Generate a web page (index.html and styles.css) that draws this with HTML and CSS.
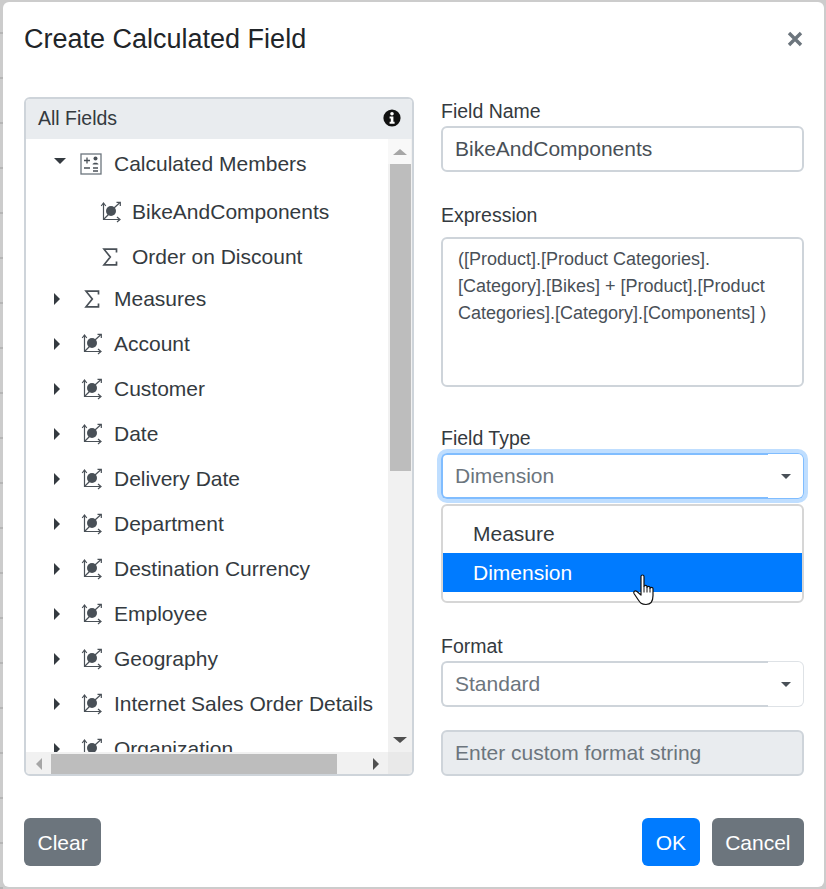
FILE: index.html
```html
<!DOCTYPE html>
<html lang="en">
<head>
  <meta charset="UTF-8">
  <title>Create Calculated Field</title>
  <link rel="stylesheet" href="styles.css">
</head>
<body>

  <svg class="defs" width="0" height="0">
    <symbol id="dim" viewBox="0 0 22 22">
      <g fill="none" stroke="#495057" stroke-width="1.2">
        <path d="M3.5 3v15.5h16"/>
        <path d="M1.2 5 3.5 2 5.8 5"/>
        <path d="M17 16 20 18.500 17 21"/>
        <path d="M3.500 18.500 9 13"/>
        <path d="M14 7 20 1.500"/>
        <path d="M16.500 1.300h3.800v3.800"/>
      </g>
      <circle cx="11" cy="10" r="5" fill="#495057"/>
    </symbol>
    <symbol id="sigma" viewBox="0 0 16 18">
      <path d="M14.500 4.500V1.200H2l6.300 7.800L2 16.800h12.500v-3.300" fill="none" stroke="#495057" stroke-width="1.700"/>
    </symbol>
    <symbol id="calc" viewBox="0 0 22 22">
      <rect x="1" y="1" width="20" height="20" fill="#fff" stroke="#6c757d" stroke-width="1.300"/>
      <path d="M4 7.500h6M7 4.500v6M4 15h6M13 15h5M13 18h5" fill="none" stroke="#495057" stroke-width="1.300"/>
      <circle cx="15.500" cy="5.500" r="2" fill="#495057"/>
      <path d="M12.500 11.500c0-2.500 6-2.500 6 0z" fill="#495057"/>
    </symbol>
  </svg>

  <div class="dialog">
    <header class="dialog-head">
      <h1>Create Calculated Field</h1>
      <svg class="close" width="16" height="16" viewBox="0 0 16 16"><path d="M2 2l12 12M14 2 2 14"/></svg>
    </header>

    <div class="dialog-body">
      <section class="fields">
        <div class="fields-head">
          <span>All Fields</span>
          <svg class="info" width="18" height="18" viewBox="0 0 18 18">
            <circle cx="9" cy="9" r="8.600" fill="#111"/>
            <circle cx="9" cy="4.800" r="1.800" fill="#fff"/>
            <path d="M6.600 7.600h3.800v5.200h1.200v1.900H6.600v-1.900h1.200V9.500H6.600z" fill="#fff"/>
          </svg>
        </div>

        <div class="fields-main">
          <ul class="tree">
            <li class="row row-first"><i class="caret-down"></i><svg class="ico"><use href="#calc"/></svg>Calculated Members</li>
            <li class="row row-child row-bike"><svg class="ico"><use href="#dim"/></svg>BikeAndComponents</li>
            <li class="row row-child row-order"><svg class="ico ico-sigma"><use href="#sigma"/></svg>Order on Discount</li>
            <li class="row row-measures"><i class="caret-right"></i><svg class="ico ico-sigma"><use href="#sigma"/></svg>Measures</li>
            <li class="row"><i class="caret-right"></i><svg class="ico"><use href="#dim"/></svg>Account</li>
            <li class="row"><i class="caret-right"></i><svg class="ico"><use href="#dim"/></svg>Customer</li>
            <li class="row"><i class="caret-right"></i><svg class="ico"><use href="#dim"/></svg>Date</li>
            <li class="row"><i class="caret-right"></i><svg class="ico"><use href="#dim"/></svg>Delivery Date</li>
            <li class="row"><i class="caret-right"></i><svg class="ico"><use href="#dim"/></svg>Department</li>
            <li class="row"><i class="caret-right"></i><svg class="ico"><use href="#dim"/></svg>Destination Currency</li>
            <li class="row"><i class="caret-right"></i><svg class="ico"><use href="#dim"/></svg>Employee</li>
            <li class="row"><i class="caret-right"></i><svg class="ico"><use href="#dim"/></svg>Geography</li>
            <li class="row"><i class="caret-right"></i><svg class="ico"><use href="#dim"/></svg>Internet Sales Order Details</li>
            <li class="row"><i class="caret-right"></i><svg class="ico"><use href="#dim"/></svg>Organization</li>
          </ul>

          <div class="vbar">
            <div class="vbar-btn"><i class="arrow-up"></i></div>
            <div class="vbar-thumb"></div>
            <div class="vbar-rest"><i class="arrow-down"></i></div>
          </div>

          <div class="hbar">
            <div class="hbar-btn"><i class="arrow-left"></i></div>
            <div class="hbar-thumb"></div>
            <div class="hbar-rest"><i class="arrow-right"></i></div>
          </div>
          <div class="corner"></div>
        </div>
      </section>

      <section class="form">
        <label class="lbl lbl-name">Field Name</label>
        <div class="input">BikeAndComponents</div>

        <label class="lbl lbl-expr">Expression</label>
        <div class="expr">([Product].[Product Categories].<br>[Category].[Bikes] + [Product].[Product<br>Categories].[Category].[Components] )</div>

        <label class="lbl lbl-type">Field Type</label>
        <div class="select focused"><span class="sel-text">Dimension</span><span class="sel-btn"><i class="caret-down"></i></span></div>
        <ul class="menu">
          <li>Measure</li>
          <li class="selected">Dimension</li>
        </ul>

        <label class="lbl lbl-format">Format</label>
        <div class="select"><span class="sel-text">Standard</span><span class="sel-btn"><i class="caret-down"></i></span></div>

        <div class="input disabled">Enter custom format string</div>
      </section>
    </div>

    <footer class="dialog-foot">
      <button class="btn btn-grey btn-clear">Clear</button>
      <button class="btn btn-blue">OK</button>
      <button class="btn btn-grey">Cancel</button>
    </footer>
  </div>

  <svg class="cursor" width="26" height="34" viewBox="0 0 26 34">
    <path d="M9 2.500c0-2 3-2 3 0v10c0-1.500 3-1.500 3 0v1c0-1.500 3-1.500 3 0v1c0-1.500 3-1.500 3 0v7c0 5-2 9-7 9s-6-2-8-5l-4-6c-1-2 1-3.500 3-2l4 3.500z" fill="#fff" stroke="#111" stroke-width="1.200" stroke-linejoin="round"/>
    <path d="M12 12.500v6M15 13.500v5M18 14.500v4" fill="none" stroke="#111"/>
  </svg>

</body>
</html>
```

FILE: styles.css
```css
* { box-sizing: border-box; }
html, body { margin: 0; height: 889px; overflow: hidden; }
body { position: relative; background: #ccc linear-gradient(#b5b5b5 2px, transparent 2px) 0 32px / 3px 45px repeat-y; font-family: "Liberation Sans", Arial, sans-serif; font-size: 21px; color: #343a40; padding: 2px 2px 2px 3px; }
.defs { position: absolute; }

.dialog { height: 885px; background: #fff; border-radius: 6px; display: flex; flex-direction: column; }

.dialog-head { height: 95px; padding: 20px 21px 0 21px; display: flex; justify-content: space-between; flex-shrink: 0; }
.dialog-head h1 { margin: 0; font-size: 27px; font-weight: 400; line-height: 34px; color: #212529; }
.close { margin: 9px 0 0 0; fill: none; stroke: #6c757d; stroke-width: 3.400; }

.dialog-body { display: flex; padding: 0 20px 0 21px; gap: 27px; height: 679px; flex-shrink: 0; }

.fields { width: 390px; flex-shrink: 0; border: 2px solid #ced4da; border-radius: 6px; overflow: hidden; display: flex; flex-direction: column; }
.fields-head { height: 40px; flex-shrink: 0; background: #e9ecef; padding: 0 11px 2px 12px; display: flex; align-items: center; justify-content: space-between; font-size: 19.500px; }
.fields-main { flex: 1; display: grid; grid-template-columns: 1fr 24px; grid-template-rows: 1fr 22px; min-height: 0; }

.tree { list-style: none; margin: 0; padding: 0; height: 613px; overflow: hidden; }
.row { height: 45px; display: flex; align-items: center; padding-left: 28px; white-space: nowrap; }
.row-first { height: 50px; }
.row-first .ico { margin-right: 12px; }
.row-child { padding-left: 74px; }
.row-bike { height: 46px; }
.row-order { height: 44px; }
.row-measures { height: 40px; margin-bottom: 2px; }
.ico { width: 22px; height: 22px; margin-left: 14px; margin-right: 11px; flex-shrink: 0; }
.ico-sigma { width: 16px; height: 18px; margin-left: 17px; margin-right: 14px; }
.row-child .ico { margin: 0 10px 0 0; }
.row-child .ico-sigma { margin: 0 14px 0 2px; }

.caret-down { display: block; width: 0; height: 0; border: 6.500px solid transparent; border-top: 6px solid #343a40; border-bottom: 0; }
.row-first .caret-down { margin-top: -6px; }
.caret-right { display: block; width: 0; height: 0; margin-right: 7px; border: 6.500px solid transparent; border-left: 6px solid #343a40; border-right: 0; }

.vbar { background: #f1f1f1; display: flex; flex-direction: column; padding-right: 1px; }
.vbar-btn { height: 25px; background: #f8f8f8; display: flex; justify-content: center; align-items: center; }
.vbar-thumb { height: 307px; background: #bdbdbd; margin-left: 2px; }
.vbar-rest { flex: 1; display: flex; justify-content: center; align-items: flex-end; padding-bottom: 9px; }

.hbar { grid-column: 1; background: #f1f1f1; display: flex; padding-top: 2px; }
.hbar-btn { width: 25px; display: flex; align-items: center; justify-content: center; }
.hbar-thumb { width: 286px; background: #bdbdbd; }
.hbar-rest { flex: 1; display: flex; align-items: center; justify-content: flex-end; padding-right: 9px; }
.corner { background: #e9e9e9; }

.arrow-up { width: 0; height: 0; border: 7px solid transparent; border-top: 0; border-bottom: 6px solid #a6a6a6; }
.arrow-down { width: 0; height: 0; border: 7px solid transparent; border-bottom: 0; border-top: 6px solid #505050; }
.arrow-left { width: 0; height: 0; border: 6px solid transparent; border-left: 0; border-right: 6px solid #a6a6a6; }
.arrow-right { width: 0; height: 0; border: 6px solid transparent; border-right: 0; border-left: 6px solid #505050; }

.form { width: 363px; display: flex; flex-direction: column; }
.lbl { display: block; line-height: 24px; font-size: 19.500px; }
.lbl-name { margin-top: 2px; margin-bottom: 3px; }
.lbl-expr { margin-top: 31px; margin-bottom: 10px; }
.lbl-type { margin-top: 39px; margin-bottom: 3px; }
.lbl-format { margin-top: 31px; margin-bottom: 3px; }

.input { height: 46px; border: 2px solid #ced4da; border-radius: 6px; padding: 0 12px; display: flex; align-items: center; color: #495057; background: #fff; }
.disabled { margin-top: 23px; background: #e9ecef; color: #6c757d; }

.select { height: 46px; display: flex; border-radius: 6px; color: #6c757d; flex-shrink: 0; }
.sel-text { flex: 1; display: flex; align-items: center; padding-left: 12px; border: 2px solid #ced4da; border-right: 0; border-radius: 6px 0 0 6px; }
.sel-btn { width: 36px; display: flex; align-items: center; justify-content: center; border: 1px solid #dee2e6; border-left: 0; border-radius: 0 6px 6px 0; }
.sel-btn .caret-down { border-width: 5px 5px 0; border-top-color: #495057; }
.focused { box-shadow: 0 0 0 4px #bfdeff; }
.focused .sel-text { border-color: #80bdff; }
.focused .sel-btn { border-color: #80bdff; }

.expr { height: 150px; flex-shrink: 0; border: 2px solid #ced4da; border-radius: 6px; padding: 7px 15px; font-size: 18px; line-height: 27px; color: #495057; white-space: nowrap; }

.menu { list-style: none; margin: 5px 0 0 0; padding: 8px 0; height: 99px; flex-shrink: 0; border: 2px solid #d6d6d6; border-radius: 6px; background: #fff; }
.menu li { height: 39px; line-height: 39px; padding-left: 30px; }
.menu .selected { background: #007bff; color: #fff; }

.dialog-foot { display: flex; padding: 42px 20px 0 21px; gap: 12px; }
.btn { height: 48px; border: 0; border-radius: 6px; font: inherit; color: #fff; padding: 1px 13.500px 0; }
.btn-grey { background: #6c757d; }
.btn-blue { background: #007bff; }
.btn-clear { margin-right: auto; }

.cursor { position: absolute; left: 632px; top: 574px; }
```
